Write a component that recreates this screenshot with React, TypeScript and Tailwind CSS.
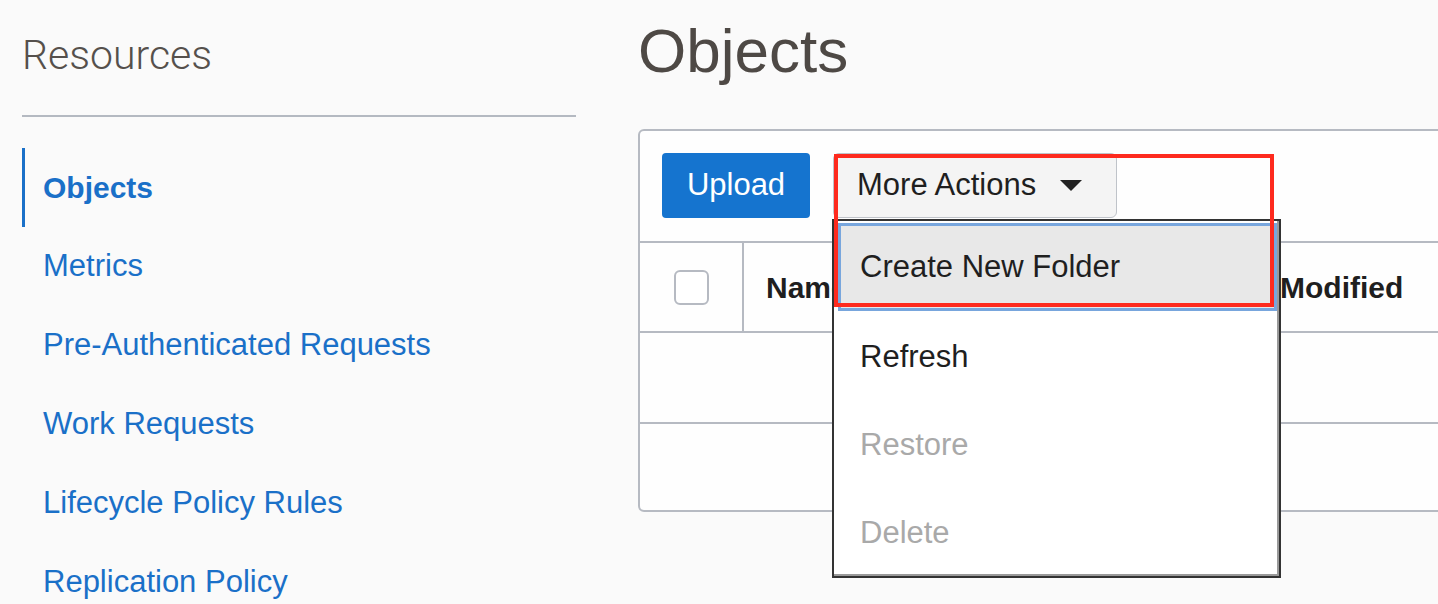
import React from "react";

const navItems = [
  "Metrics",
  "Pre-Authenticated Requests",
  "Work Requests",
  "Lifecycle Policy Rules",
  "Replication Policy",
];

export default function App() {
  return (
    <div className="relative w-[1438px] h-[604px] overflow-hidden bg-[#fafafa] flex font-['Liberation_Sans',Arial,sans-serif]">
      {/* Sidebar */}
      <aside className="w-[576px] shrink-0 pl-[22px]">
        <h2 className="pt-[35px] text-[41px] leading-none font-light text-[#55504c] font-['Roboto',sans-serif]">
          Resources
        </h2>
        <div className="mt-[39px] h-[2px] bg-[#b4b9c1]" />
        <nav className="mt-[31px] flex flex-col">
          <div className="h-[79px] flex items-center border-l-[3px] border-[#1a70c8] pl-[18px] text-[30px] font-bold text-[#1a70c8]">
            Objects
          </div>
          {navItems.map((t) => (
            <div
              key={t}
              className="h-[79px] flex items-center pl-[21px] text-[31px] text-[#1a70c8]"
            >
              {t}
            </div>
          ))}
        </nav>
      </aside>

      {/* Main */}
      <main className="ml-[62px] flex-1 min-w-0 pt-[20px]">
        <h1 className="text-[62px] leading-none text-[#4e4945]">Objects</h1>
        <div className="mt-[47px] w-[1000px] border-2 border-[#b6bac2] rounded-md bg-[#fefefe]">
          {/* Toolbar */}
          <div className="flex gap-[23px] pl-[22px] pt-[22px] pb-[23px]">
            <button className="w-[148px] h-[65px] rounded-[4px] bg-[#1574cf] text-white text-[31px]">
              Upload
            </button>
            <button className="w-[284px] h-[65px] rounded-md bg-[#f4f4f4] border border-[#bfc3c9] flex items-center pl-[23px] gap-[24px] text-[31px] text-[#1f1f1f]">
              <span>More Actions</span>
              <svg width="22" height="11" viewBox="0 0 22 11">
                <path d="M0 0 L22 0 L11 11 Z" fill="#222" />
              </svg>
            </button>
          </div>
          {/* Table header */}
          <div className="flex h-[90px] border-t-2 border-[#b6bac2]">
            <div className="w-[104px] shrink-0 border-r-2 border-[#b6bac2] flex items-center justify-center">
              <div className="w-[35px] h-[35px] rounded-md border-2 border-[#b6bac2] bg-white" />
            </div>
            <div className="w-[446px] shrink-0 pl-[22px] flex items-center text-[30px] font-bold text-[#1f1f1f]">
              Name
            </div>
            <div className="flex-1 pl-[20px] flex items-center text-[30px] font-bold text-[#1f1f1f]">
              Last Modified
            </div>
          </div>
          <div className="h-[91px] border-t-2 border-[#b6bac2]" />
          <div className="h-[88px] border-t-2 border-[#b6bac2]" />
        </div>
      </main>

      {/* Dropdown menu */}
      <div className="absolute left-[832px] top-[219px] w-[449px] h-[359px] border-2 border-[#333] bg-white shadow-[inset_-2px_-2px_0_#9a9a9a] overflow-hidden">
        <div className="pt-[2px] px-[4px] pr-[2px]">
          <div className="h-[88px] border-[3px] border-[#78a6dd] bg-[#e8e8e8] flex items-center pl-[19px] text-[31px] text-[#1f1f1f]">
            Create New Folder
          </div>
          <div className="mt-[2px] h-[88px] flex items-center pl-[22px] text-[31px] text-[#1f1f1f]">
            Refresh
          </div>
          <div className="h-[88px] flex items-center pl-[22px] text-[31px] text-[#a9a9a9]">
            Restore
          </div>
          <div className="h-[88px] flex items-center pl-[22px] text-[31px] text-[#a9a9a9]">
            Delete
          </div>
        </div>
      </div>

      {/* Red annotation box */}
      <div className="absolute left-[834px] top-[154px] w-[440px] h-[153px] border-4 border-[#fe2a1e] pointer-events-none" />
    </div>
  );
}
